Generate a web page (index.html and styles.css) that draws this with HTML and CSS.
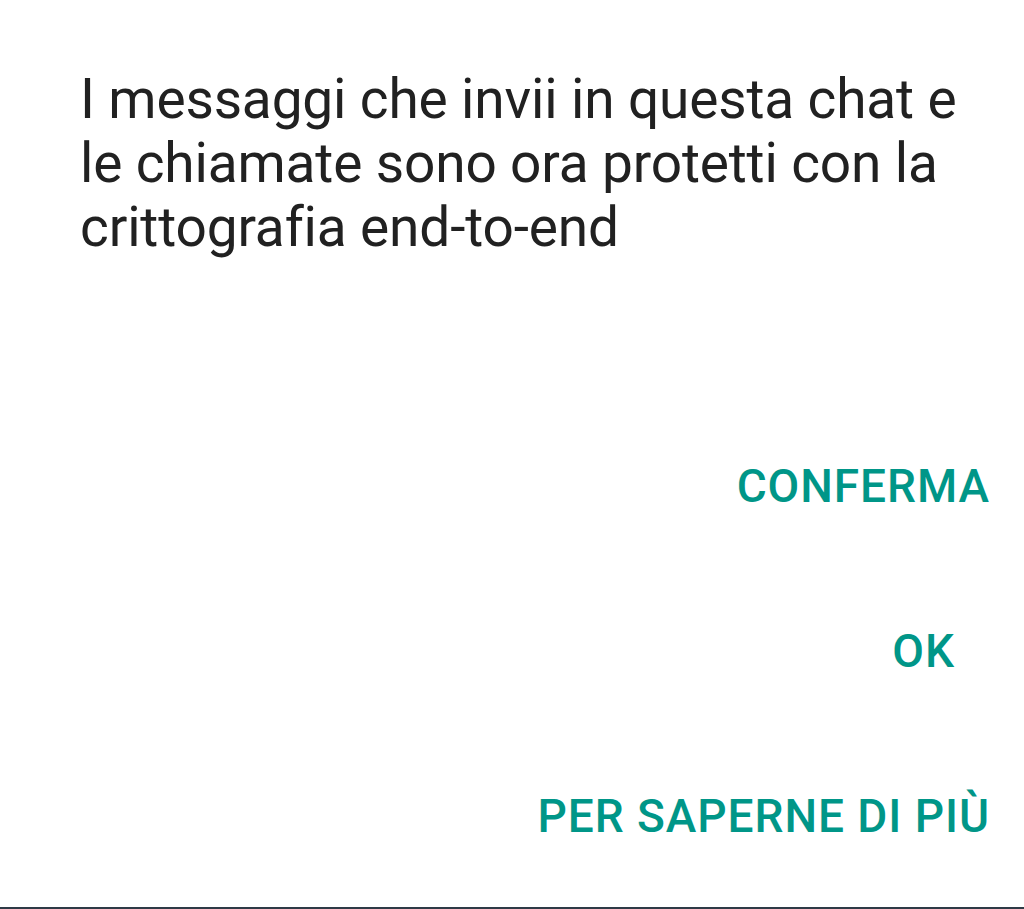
FILE: index.html
```html
<!DOCTYPE html>
<html lang="it">
<head>
<meta charset="utf-8">
<link rel="stylesheet" href="styles.css">
</head>
<body>
<div class="dialog">
  <p class="message">I messaggi che invii in questa chat e le chiamate sono ora protetti con la crittografia end-to-end</p>
  <div class="actions">
    <button class="btn">CONFERMA</button>
    <button class="btn btn-ok">OK</button>
    <button class="btn">PER SAPERNE DI PIÙ</button>
  </div>
</div>
</body>
</html>
```

FILE: styles.css
```css
html, body {
  margin: 0;
  padding: 0;
  background: #2e3a46;
}
body {
  width: 1024px;
  height: 909px;
  overflow: hidden;
  font-family: Roboto, "Noto Sans", sans-serif;
}
.dialog {
  box-sizing: border-box;
  height: 907px;
  background: #ffffff;
  padding: 67px 34px 0 80px;
  display: flex;
  flex-direction: column;
}
.message {
  margin: 0;
  width: 900px;
  font-size: 55px;
  letter-spacing: -0.15px;
  line-height: 64px;
  color: #212121;
  font-weight: 400;
}
.actions {
  margin-top: 202px;
  display: flex;
  flex-direction: column;
  align-items: flex-end;
  gap: 115px;
}
.btn {
  border: 0;
  background: none;
  padding: 0;
  margin: 0;
  font-family: Roboto, "Noto Sans", sans-serif;
  font-size: 46px;
  letter-spacing: 0.95px;
  line-height: 50px;
  font-weight: 500;
  color: #009688;
}
.btn-ok {
  margin-right: 35px;
}
```
